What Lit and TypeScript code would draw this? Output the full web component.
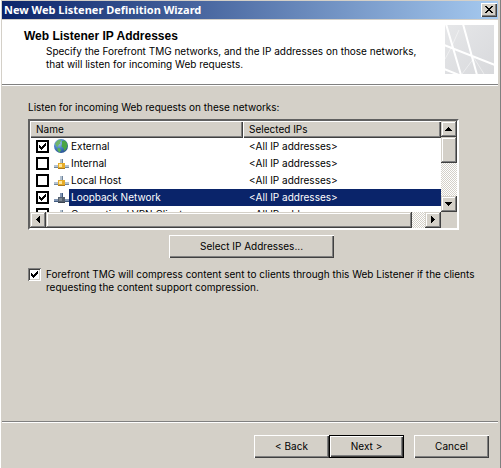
import { LitElement, html, css, svg } from "lit";
import { customElement, property } from "lit/decorators.js";

interface Network {
  name: string;
  ips: string;
  kind: "globe" | "net";
  checked: boolean;
  selected?: boolean;
}

const NETWORKS: Network[] = [
  { name: "External", ips: "<All IP addresses>", kind: "globe", checked: true },
  { name: "Internal", ips: "<All IP addresses>", kind: "net", checked: false },
  { name: "Local Host", ips: "<All IP addresses>", kind: "net", checked: false },
  { name: "Loopback Network", ips: "<All IP addresses>", kind: "net", checked: true, selected: true },
  { name: "Quarantined VPN Clients", ips: "<All IP addresses>", kind: "net", checked: false },
];

const shared = css`
  * { box-sizing: border-box; }
  button {
    font: inherit;
    color: #000;
    margin: 0;
    padding: 0;
    border: 0;
    border-radius: 0;
    background: #d4d0c8;
    box-shadow: inset 1px 1px #fff, inset -1px -1px #404040, inset -2px -2px #808080;
    display: flex;
    align-items: center;
    justify-content: center;
  }
  input {
    appearance: none;
    flex: none;
    margin: 0;
    width: 13px;
    height: 13px;
    display: grid;
    place-content: center;
    background: #fff;
  }
  input:checked::before {
    content: "";
    width: 7px;
    height: 7px;
    background: #000;
    clip-path: polygon(0 2px, 1px 2px, 1px 3px, 2px 3px, 2px 4px, 3px 4px, 3px 3px, 4px 3px, 4px 2px, 5px 2px, 5px 1px, 6px 1px, 6px 0, 7px 0, 7px 3px, 6px 3px, 6px 4px, 5px 4px, 5px 5px, 4px 5px, 4px 6px, 3px 6px, 3px 7px, 2px 7px, 2px 6px, 1px 6px, 1px 5px, 0 5px);
  }
`;

@customElement("scroll-bar")
class ScrollBar extends LitElement {
  @property({ reflect: true }) direction: "vertical" | "horizontal" = "vertical";

  static styles = [
    shared,
    css`
      :host {
        display: flex;
        background: repeating-conic-gradient(#fff 0 25%, #d4d0c8 0 50%) 0 0 / 2px 2px;
      }
      :host([direction="vertical"]) { flex-direction: column; }
      button {
        flex: none;
        width: 16px;
        height: 16px;
        box-shadow: inset -1px -1px #404040, inset 1px 1px #d4d0c8, inset -2px -2px #808080, inset 2px 2px #fff;
      }
      .thumb {
        background: #d4d0c8;
        box-shadow: inset -1px -1px #404040, inset 1px 1px #d4d0c8, inset -2px -2px #808080, inset 2px 2px #fff;
      }
      .track { flex: 1; display: flex; flex-direction: inherit; }
      :host([direction="vertical"]) .thumb { height: 26px; width: 16px; }
      :host([direction="horizontal"]) .thumb { flex: 1; margin-right: 13px; }
      svg { display: block; }
    `,
  ];

  render() {
    const vertical = this.direction === "vertical";
    const arrow = (d: string) =>
      html`<svg width="16" height="16" shape-rendering="crispEdges" aria-hidden="true"><path d=${d} /></svg>`;
    return html`
      <button aria-label=${vertical ? "Scroll up" : "Scroll left"}>
        ${arrow(vertical ? "M7 6h1v1h1v1h1v1h1v1H4V9h1V8h1V7h1z" : "M6 7h1V6h1V5h1V4h1v7H9v-1H8V9H7V8H6z")}
      </button>
      <div class="track"><div class="thumb"></div></div>
      <button aria-label=${vertical ? "Scroll down" : "Scroll right"}>
        ${arrow(vertical ? "M4 6h7v1h-1v1H9v1H8v1H7V9H6V8H5V7H4z" : "M6 4h1v1h1v1h1v1h1v1H9v1H8v1H7v1H6z")}
      </button>
    `;
  }
}

@customElement("app-root")
class AppRoot extends LitElement {
  static styles = [
    shared,
    css`
      :host {
        display: block;
        font: 10px/13px Inter, "Liberation Sans", sans-serif;
        color: #000;
      }
      .window {
        min-height: 100vh;
        display: flex;
        flex-direction: column;
        background: #d4d0c8;
        padding: 1px 3px 0 2px;
        box-shadow: inset 1px 0 #fff, inset -1px 0 #808080;
      }
      .titlebar {
        height: 18px;
        display: flex;
        align-items: center;
        justify-content: space-between;
        padding: 0 1px 0 2px;
        margin-bottom: 1px;
        background: linear-gradient(90deg, #0a246a, #a6caf0);
        color: #fff;
        font: bold 11px/18px "Noto Sans", sans-serif;
      }
      .titlebar button { width: 16px; height: 14px; }
      .banner {
        display: flex;
        justify-content: space-between;
        align-items: flex-start;
        background: #fff;
        padding: 5px 4px 10px 22px;
        border-bottom: 1px solid #808080;
        box-shadow: 0 1px #fff;
      }
      h1 { margin: 4px 0 2px; font: bold 12px/14px "Liberation Sans", Arial, sans-serif; }
      .banner p { margin: 0 0 0 22px; }
      .banner svg { flex: none; display: block; }
      .content { flex: 1; padding: 16px 23px 0 26px; }
      .caption { margin: 0 0 5px; }
      .list {
        display: grid;
        grid-template-columns: 1fr 16px;
        grid-template-rows: 91px 16px;
        margin-right: 16px;
        border: 2px solid;
        border-color: #606060 #fff #fff #606060;
        background: #d4d0c8;
      }
      .pane { overflow: hidden; background: #fff; }
      table { width: 100%; border-collapse: collapse; table-layout: fixed; }
      th, td { padding: 0; height: 17px; font-weight: normal; text-align: left; white-space: nowrap; }
      th {
        padding-left: 6px;
        background: #d4d0c8;
        box-shadow: inset 1px 1px #fff, inset -1px -1px #404040, inset -2px -2px #808080;
      }
      .name { width: 213px; }
      td.ips { padding-left: 6px; }
      .cell { display: flex; align-items: center; height: 17px; padding-left: 6px; }
      .cell input { border: 2px solid #000; }
      .cell svg { flex: none; margin-left: 5px; }
      .cell label { flex: 1; padding-left: 2px; line-height: 17px; }
      .selected label, .selected .ips { background: #0a246a; color: #fff; }
      .pick { width: 165px; height: 23px; margin: 5px auto 10px; }
      .compress { display: flex; gap: 5px; }
      .compress input {
        box-shadow: inset 1px 1px #808080, inset -1px -1px #fff, inset 2px 2px #404040, inset -2px -2px #d4d0c8;
      }
      .footer {
        display: flex;
        justify-content: flex-end;
        border-top: 1px solid #808080;
        box-shadow: inset 0 1px #fff;
        padding: 13px 9px 10px;
      }
      .footer button { width: 75px; height: 23px; }
      .footer .default {
        border: 1px solid #000;
        margin-right: 10px;
      }
    `,
  ];

  private globe() {
    return svg`<svg width="15" height="15" viewBox="0 0 15 15" aria-hidden="true">
      <defs><radialGradient id="sea" cx=".35" cy=".3" r=".75">
        <stop offset="0" stop-color="#a9c9f2"/><stop offset=".5" stop-color="#4a80c8"/><stop offset="1" stop-color="#24508e"/>
      </radialGradient></defs>
      <circle cx="7" cy="7" r="7" fill="url(#sea)"/>
      <path d="M1 4.500 3.500 1.500 6.500 .5 7.500 2 6 3 6.500 4.500 4.500 6 4 8 2.500 7.500z" fill="#6fb56a"/>
      <path d="M8 2 11 1.500 13 4 13.500 7.500 11.500 11 10.500 12 9.500 9 7.500 7.500 8 5z" fill="#4aa545"/>
      <path d="M3.500 8.500 6 9.500 7 11.500 5.500 13.500 3.500 11.500z" fill="#5bb356"/>
    </svg>`;
  }

  private adapter(selected: boolean) {
    const body = selected ? "#56616f" : "#e6ac28";
    const hi = selected ? "#7d8792" : "#ffe69a";
    const pipe = selected ? "#8296b4" : "#b4c2d0";
    const low = selected ? "#405a80" : "#71869c";
    return svg`<svg width="15" height="15" viewBox="0 0 15 15" shape-rendering="crispEdges" aria-hidden="true">
      <path d="M6 3h3v4H6z" fill=${pipe}/><path d="M8 3h1v4H8z" fill=${low}/>
      <path d="M0 9h15v2H0z" fill=${pipe}/><path d="M0 11h15v1H0z" fill=${low}/>
      <path d="M4 7h7v6H4z" fill=${body}/><path d="M5 8h3v3H5z" fill=${hi}/>
      <path d="M4 12h7v1H4z" fill=${selected ? "#3c4652" : "#a87820"}/>
    </svg>`;
  }

  render() {
    return html`
      <div class="window">
        <header class="titlebar">
          <span>New Web Listener Definition Wizard</span>
          <button aria-label="Close">
            <svg width="16" height="14" shape-rendering="crispEdges" aria-hidden="true">
              <path d="M4 3h2v1h1v1h2V4h1V3h2v1h-1v1h-1v1H9v1h1v1h1v1h1v1h-2V9H9V8H7v1H6v1H4V9h1V8h1V7h1V6H6V5H5V4H4z" />
            </svg>
          </button>
        </header>
        <section class="banner">
          <div>
            <h1>Web Listener IP Addresses</h1>
            <p>Specify the Forefront TMG networks, and the IP addresses on those networks,<br />that will listen for incoming Web requests.</p>
          </div>
          <svg width="49" height="49" viewBox="0 0 49 49" aria-hidden="true">
            <defs><linearGradient id="haze" x1="0" y1="0" x2="1" y2="1">
              <stop offset="0" stop-color="#e6e7e9" /><stop offset="1" stop-color="#d8d9dc" />
            </linearGradient></defs>
            <rect width="49" height="49" fill="url(#haze)" />
            <g fill="none" stroke="#fff">
              <path d="M1-1 16 50M18-1 32 50M-1 20 50 40" stroke-width="2" />
              <path d="M-1 44 14 50" stroke-width="2" />
              <path d="M17 49 29 33M29 33 39 49M0 34 6 23 14 5" stroke-width="1" opacity=".45" />
            </g>
          </svg>
        </section>
        <main class="content">
          <p class="caption" id="caption">Listen for incoming Web requests on these networks:</p>
          <div class="list">
            <div class="pane">
              <table aria-labelledby="caption">
                <thead><tr><th class="name" scope="col">Name</th><th scope="col">Selected IPs</th></tr></thead>
                <tbody>
                  ${NETWORKS.map(
                    (n, i) => html`<tr class=${n.selected ? "selected" : ""}>
                      <td><div class="cell">
                        <input type="checkbox" id="net${i}" .checked=${n.checked} />
                        ${n.kind === "globe" ? this.globe() : this.adapter(!!n.selected)}
                        <label for="net${i}">${n.name}</label>
                      </div></td>
                      <td class="ips">${n.ips}</td>
                    </tr>`
                  )}
                </tbody>
              </table>
            </div>
            <scroll-bar direction="vertical"></scroll-bar>
            <scroll-bar direction="horizontal"></scroll-bar>
          </div>
          <button class="pick">Select IP Addresses...</button>
          <div class="compress">
            <input type="checkbox" id="compress" .checked=${true} />
            <label for="compress">Forefront TMG will compress content sent to clients through this Web Listener if the clients<br />requesting the content support compression.</label>
          </div>
        </main>
        <footer class="footer">
          <button>&lt; Back</button>
          <button class="default">Next &gt;</button>
          <button>Cancel</button>
        </footer>
      </div>
    `;
  }
}
